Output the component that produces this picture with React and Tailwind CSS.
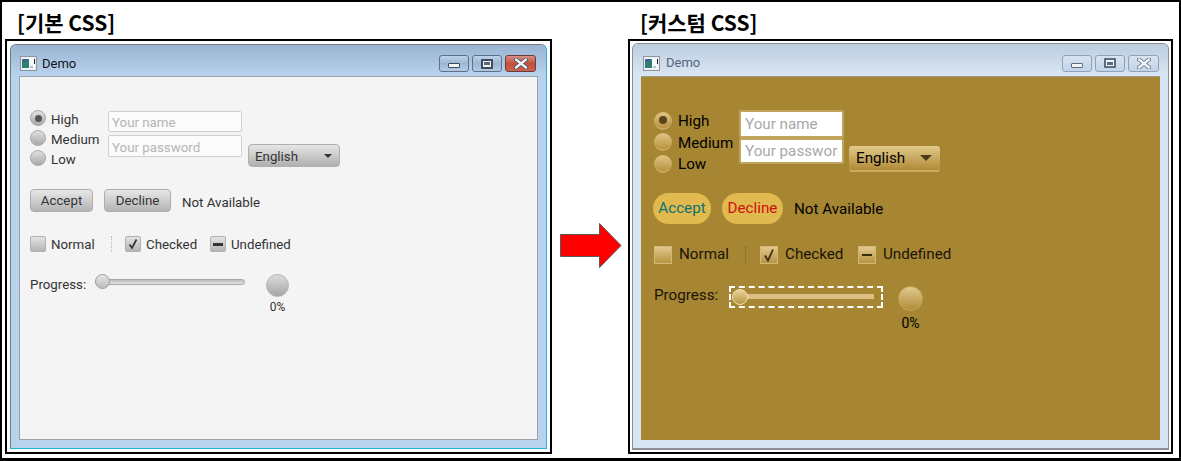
const FONT = "font-['Roboto','Noto_Sans',sans-serif]";
const UI_FONT = "font-['Noto_Sans','Roboto',sans-serif]";

function WindowIcon() {
  return (
    <svg width="17" height="15" viewBox="0 0 17 15" className="shrink-0">
      <rect x="0.5" y="0.5" width="16" height="14" fill="#e8edf2" stroke="#8c97a3" />
      <rect x="2" y="2" width="13" height="11" fill="#f7f9fb" />
      <rect x="2" y="3" width="7" height="9" fill="#2f7f73" />
      <rect x="3" y="3" width="4" height="3" fill="#3c5f9a" />
      <rect x="10" y="10" width="3" height="2" fill="#b9c2cb" />
      <rect x="14" y="3" width="1" height="5" fill="#222" />
    </svg>
  );
}

function CaptionButtons({ faded }) {
  const base = faded
    ? "border-[#8ea3bb] bg-gradient-to-b from-[#d7e3f0] to-[#c3d4e7]"
    : "border-[#5f7086] bg-gradient-to-b from-[#bcd2e9] via-[#9db8d4] to-[#b2cbe5]";
  const close = faded
    ? "border-[#8ea3bb] bg-gradient-to-b from-[#d7e3f0] to-[#c3d4e7]"
    : "border-[#6d3b3b] bg-gradient-to-b from-[#d98f82] via-[#c0503c] to-[#c9654f]";
  const glyph = "#f2f5f8";
  const edge = faded ? "#5b6b7d" : "#3d4b5c";
  return (
    <div className="flex gap-[3px]">
      <div className={`w-[30px] h-[17px] rounded-[3px] border flex items-end justify-center pb-[3px] ${base}`}>
        <div className="w-[12px] h-[5px] rounded-[1px] border" style={{ background: glyph, borderColor: edge }} />
      </div>
      <div className={`w-[30px] h-[17px] rounded-[3px] border flex items-center justify-center ${base}`}>
        <div className="w-[12px] h-[10px] rounded-[1px] border-2 flex items-center justify-center" style={{ background: glyph, borderColor: edge }}>
          <div className="w-[6px] h-[3px] bg-[#5a6a7c]" />
        </div>
      </div>
      <div className={`w-[31px] h-[17px] rounded-[3px] border flex items-center justify-center ${close}`}>
        <svg width="14" height="11" viewBox="0 0 14 11">
          <path d="M2 1.5 L12 9.5 M12 1.5 L2 9.5" stroke={edge} strokeWidth="4" strokeLinecap="round" />
          <path d="M2 1.5 L12 9.5 M12 1.5 L2 9.5" stroke={glyph} strokeWidth="2.4" strokeLinecap="round" />
        </svg>
      </div>
    </div>
  );
}

function Radio({ label, selected }) {
  return (
    <div className="flex items-center h-[20px] gap-[5px]">
      <div className="w-[16px] h-[16px] rounded-full border border-[#a9a9a9] bg-gradient-to-b from-[#e2e2e2] to-[#a8a8a8] flex items-center justify-center">
        {selected && <div className="w-[7px] h-[7px] rounded-full bg-[#555555]" />}
      </div>
      <span className="text-[13.3px] pt-[4px] text-[#333333]">{label}</span>
    </div>
  );
}

function Check({ label, mark, className = "" }) {
  return (
    <div className={`flex items-center gap-[5px] h-[16px] ${className}`}>
      <div className="w-[16px] h-[16px] rounded-[2px] border border-[#b0b0b0] bg-gradient-to-b from-[#e4e4e4] to-[#b4b4b4] flex items-center justify-center">
        {mark === "check" && (
          <svg width="12" height="12" viewBox="0 0 12 12">
            <path d="M2.5 6.5 L5 10 L9.5 1.5" fill="none" stroke="#333" strokeWidth="1.7" />
          </svg>
        )}
        {mark === "dash" && <div className="w-[10px] h-[3px] bg-[#333333]" />}
      </div>
      <span className="text-[13.3px] pt-[2px] text-[#333333]">{label}</span>
    </div>
  );
}

function DefaultPanel() {
  return (
    <div className={`flex-1 bg-[#f4f4f4] border border-[#9aa3ab] pl-[10px] pt-[31px] ${FONT}`}>
      <div className="flex items-start">
        <div className="w-[78px] flex flex-col">
          <Radio label="High" selected />
          <Radio label="Medium" />
          <Radio label="Low" />
        </div>
        <div className="w-[134px] mt-[3px] flex flex-col gap-[3px]">
          <div className="h-[21px] bg-[#fbfbfb] border border-[#d0d0d0] rounded-[2px] pl-[3px] text-[13.3px] leading-[21px] text-[#b5b5b5]">Your name</div>
          <div className="h-[22px] bg-[#fbfbfb] border border-[#d0d0d0] rounded-[2px] pl-[3px] text-[13.3px] leading-[23px] text-[#b5b5b5]">Your password</div>
        </div>
        <div className="ml-[6px] mt-[36px] w-[92px] h-[23px] rounded-[4px] border border-[#b0b0b0] bg-gradient-to-b from-[#e6e6e6] to-[#b0b0b0] flex items-center justify-between pl-[6px] pr-[7px] text-[13.3px] text-[#333333]">
          <span className="pt-[2px]">English</span>
          <div className="w-0 h-0 border-x-[4px] border-x-transparent border-t-[4px] border-t-[#333333]" />
        </div>
      </div>

      <div className="mt-[21px] flex items-center h-[23px] text-[13.3px] text-[#333333]">
        <div className="w-[63px] h-[23px] rounded-[4px] border border-[#adadad] bg-gradient-to-b from-[#e8e8e8] to-[#b4b4b4] text-center leading-[21px]">Accept</div>
        <div className="ml-[11px] w-[67px] h-[23px] rounded-[4px] border border-[#adadad] bg-gradient-to-b from-[#e8e8e8] to-[#b4b4b4] text-center leading-[21px]">Decline</div>
        <span className="ml-[11px] pt-[4px]">Not Available</span>
      </div>

      <div className="mt-[24px] flex items-center">
        <Check label="Normal" className="w-[81px]" />
        <div className="h-[16px] border-l border-dotted border-[#b5b5b5]" />
        <Check label="Checked" mark="check" className="ml-[13px] w-[85px]" />
        <Check label="Undefined" mark="dash" />
      </div>

      <div className="mt-[22px] flex items-start">
        <span className="w-[65px] text-[13.3px] leading-[22px] text-[#333333]">Progress:</span>
        <div className="w-[150px] h-[15px] flex items-center relative">
          <div className="w-full h-[6px] rounded-full border border-[#a8a8a8] bg-gradient-to-b from-[#bdbdbd] to-[#e4e4e4]" />
          <div className="absolute left-0 top-0 w-[15px] h-[15px] rounded-full border border-[#9c9c9c] bg-gradient-to-b from-[#e6e6e6] to-[#bcbcbc]" />
        </div>
        <div className="ml-[21px] w-[23px] flex flex-col items-center">
          <div className="w-[23px] h-[23px] rounded-full border border-[#b5b5b5] bg-gradient-to-b from-[#dcdcdc] to-[#a6a6a6]" />
          <span className="mt-[1px] text-[12px] leading-[18px] text-[#333333]">0%</span>
        </div>
      </div>
    </div>
  );
}

function GoldRadio({ label, selected }) {
  return (
    <div className="flex items-center h-[21.5px] gap-[6px]">
      <div className="w-[18px] h-[18px] rounded-full border-b-2 border-[#c9a75e] bg-gradient-to-b from-[#e0c684] to-[#b8923f] flex items-center justify-center">
        {selected && <div className="w-[8px] h-[8px] rounded-full bg-[#5b431a]" />}
      </div>
      <span className="text-[15.2px] pt-[2px] text-black">{label}</span>
    </div>
  );
}

function GoldCheck({ label, mark, className = "" }) {
  return (
    <div className={`flex items-center gap-[7px] h-[18px] ${className}`}>
      <div className="w-[18px] h-[18px] border border-[#d3b878] bg-gradient-to-b from-[#e0c88c] to-[#b8933f] flex items-center justify-center">
        {mark === "check" && (
          <svg width="14" height="14" viewBox="0 0 14 14">
            <path d="M3 7.5 L6 12.5 L11 1.5" fill="none" stroke="#3a2c10" strokeWidth="1.8" />
          </svg>
        )}
        {mark === "dash" && <div className="w-[10px] h-[2px] bg-[#3a2c10]" />}
      </div>
      <span className="text-[15.2px] text-[#1a1408]">{label}</span>
    </div>
  );
}

function CustomPanel() {
  return (
    <div className={`flex-1 bg-[#a68632] border-t border-[#a09a80] pl-[13px] pt-[33px] ${FONT}`}>
      <div className="flex items-start">
        <div className="w-[85px] flex flex-col">
          <GoldRadio label="High" selected />
          <GoldRadio label="Medium" />
          <GoldRadio label="Low" />
        </div>
        <div className="w-[105px] flex flex-col">
          <div className="h-[28px] bg-white border-2 border-[#c2a45c] rounded-[2px] pl-[4px] text-[15.2px] leading-[25px] text-[#a8a8a8]">Your name</div>
          <div className="h-[26px] bg-white border-2 border-[#c2a45c] rounded-[2px] pl-[4px] text-[15.2px] leading-[23px] text-[#a8a8a8]">
            <span className="block w-[93px] overflow-hidden whitespace-nowrap">Your password</span>
          </div>
        </div>
        <div className="ml-[5px] mt-[36px] w-[91px] h-[26px] rounded-[3px] border-b-2 border-[#c9ab62] bg-gradient-to-b from-[#e2c98a] to-[#b08a36] flex items-center justify-between pl-[7px] pr-[8px] text-[15.2px] text-black">
          English
          <div className="w-0 h-0 border-x-[6px] border-x-transparent border-t-[6px] border-t-[#4a3a18]" />
        </div>
      </div>

      <div className="mt-[18px] -ml-px flex items-center h-[31px] text-[15.2px]">
        <div className="w-[58px] h-[31px] rounded-full bg-[#e0b94f] text-center leading-[31px] text-[#0f7070]">Accept</div>
        <div className="ml-[11px] w-[61px] h-[31px] rounded-full bg-[#e0b94f] text-center leading-[31px] text-[#d01010]">Decline</div>
        <span className="ml-[11px] pt-[2px] text-black">Not Available</span>
      </div>

      <div className="mt-[22px] flex items-center">
        <GoldCheck label="Normal" className="w-[91px]" />
        <div className="h-[18px] border-l border-dotted border-[#86692a]" />
        <GoldCheck label="Checked" mark="check" className="ml-[14px] w-[98px]" />
        <GoldCheck label="Undefined" mark="dash" />
      </div>

      <div className="mt-[22px] flex items-start">
        <span className="w-[75px] text-[15.2px] leading-[18px] text-[#1a1408]">Progress:</span>
        <div className="w-[154px] h-[22px] border-2 border-dashed border-white flex items-center pl-[2px] pr-[7px] relative">
          <div className="w-full h-[5px] bg-[#dcc083]" />
          <div className="absolute left-[1px] top-0 w-[16px] h-[16px] mt-[1px] rounded-full border border-[#f0e2b8] bg-gradient-to-b from-[#e8d29a] to-[#b8953f]" />
        </div>
        <div className="ml-[15px] w-[25px] flex flex-col items-center">
          <div className="w-[25px] h-[25px] rounded-full border border-[#c2a45a] bg-gradient-to-b from-[#e2ca8c] to-[#b08c38]" />
          <span className="mt-[2px] text-[14px] leading-[20px] text-black">0%</span>
        </div>
      </div>
    </div>
  );
}

export default function App() {
  return (
    <div className={`w-[1181px] h-[461px] bg-white border-x-2 border-t-2 border-b-[3px] border-black flex overflow-hidden ${UI_FONT}`}>
      <div className="ml-[3px] w-[547px] flex flex-col">
        <div className="h-[37px] pl-[12px] pt-[7px] text-[21px] leading-[26px] font-bold text-black font-['Noto_Sans_CJK_KR',sans-serif]">[기본 CSS]</div>
        <div className="h-[415px] border-2 border-black p-[3px] flex">
          <div className="flex-1 flex flex-col rounded-t-[6px] border border-[#6f7a85] border-b-[#1fb5d8] border-r-[#1fb5d8] bg-[#b8d3ee] px-[8px] pb-[8px]">
            <div className="h-[31px] -mx-[8px] rounded-t-[6px] bg-gradient-to-b from-[#9ab5d2] to-[#b9d3ed] flex items-center gap-[5px] pt-[6px] pl-[9px] pr-[10px]">
              <WindowIcon />
              <span className={`text-[13px] text-[#10131a] ${FONT}`}>Demo</span>
              <div className="ml-auto"><CaptionButtons /></div>
            </div>
            <DefaultPanel />
          </div>
        </div>
      </div>

      <div className="w-[76px] pl-[8px] pt-[221px]">
        <svg width="62" height="46" viewBox="0 0 62 46">
          <path d="M0.5 11.5 H39.5 V0.5 L61 22.5 L39.5 44.5 V33.5 H0.5 Z" fill="#ff0000" stroke="#5a5a5a" />
        </svg>
      </div>

      <div className="w-[545px] flex flex-col">
        <div className="h-[37px] pl-[12px] pt-[7px] text-[21px] leading-[26px] font-bold text-black font-['Noto_Sans_CJK_KR',sans-serif]">[커스텀 CSS]</div>
        <div className="h-[415px] border-2 border-black p-[2px] flex">
          <div className="flex-1 flex flex-col rounded-t-[6px] border border-[#8a8f95] border-b-2 bg-[#d6e4f3] px-[8px] pb-[8px]">
            <div className="h-[32px] -mx-[8px] rounded-t-[6px] bg-gradient-to-b from-[#bccde0] to-[#dae6f3] flex items-center gap-[6px] pt-[6px] pl-[10px] pr-[9px]">
              <WindowIcon />
              <span className={`text-[13px] text-[#55657a] ${FONT}`}>Demo</span>
              <div className="ml-auto"><CaptionButtons faded /></div>
            </div>
            <CustomPanel />
          </div>
        </div>
      </div>
    </div>
  );
}
